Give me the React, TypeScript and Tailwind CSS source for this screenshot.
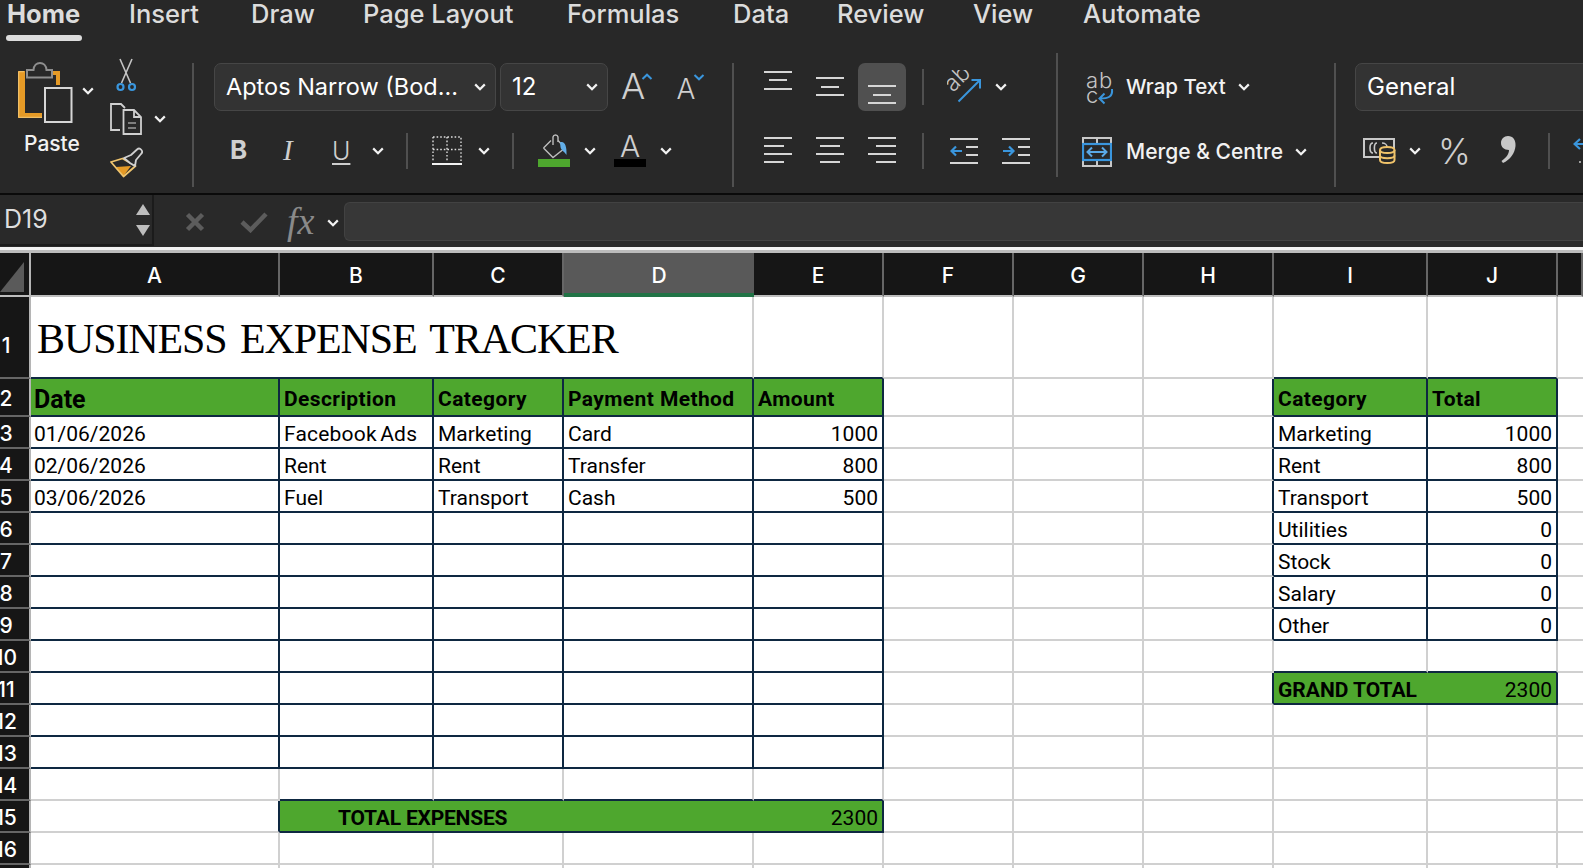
import React from "react";

const tabs = [
  { label: "Home", w: "w-[122px]", active: true },
  { label: "Insert", w: "w-[122px]" },
  { label: "Draw", w: "w-[112px]" },
  { label: "Page Layout", w: "w-[204px]" },
  { label: "Formulas", w: "w-[166px]" },
  { label: "Data", w: "w-[104px]" },
  { label: "Review", w: "w-[136px]" },
  { label: "View", w: "w-[110px]" },
  { label: "Automate", w: "w-[130px]" },
];

const colLetters = ["A", "B", "C", "D", "E", "F", "G", "H", "I", "J", ""];

const content: Record<number, Record<number, string>> = {
  2: { 0: "Date", 1: "Description", 2: "Category", 3: "Payment Method", 4: "Amount", 8: "Category", 9: "Total" },
  3: { 0: "01/06/2026", 1: "Facebook Ads", 2: "Marketing", 3: "Card", 4: "1000", 8: "Marketing", 9: "1000" },
  4: { 0: "02/06/2026", 1: "Rent", 2: "Rent", 3: "Transfer", 4: "800", 8: "Rent", 9: "800" },
  5: { 0: "03/06/2026", 1: "Fuel", 2: "Transport", 3: "Cash", 4: "500", 8: "Transport", 9: "500" },
  6: { 8: "Utilities", 9: "0" },
  7: { 8: "Stock", 9: "0" },
  8: { 8: "Salary", 9: "0" },
  9: { 8: "Other", 9: "0" },
};

function isBoxed(r: number, c: number) {
  if (r >= 2 && r <= 13 && c >= 0 && c <= 4) return true;
  if (r >= 2 && r <= 9 && (c === 8 || c === 9)) return true;
  if (r === 11 && (c === 8 || c === 9)) return true;
  if (r === 15 && c >= 1 && c <= 4) return true;
  return false;
}

function Chev({ className = "" }: { className?: string }) {
  return (
    <svg viewBox="0 0 12 8" className={`w-[12px] h-[8px] shrink-0 ${className}`} fill="none">
      <path d="M1.2 1.4 L6 6.2 L10.8 1.4" stroke="#f2f2f2" strokeWidth="2.2" />
    </svg>
  );
}

function Sep({ className = "" }: { className?: string }) {
  return <div className={`w-[2px] h-[36px] bg-[#505050] shrink-0 ${className}`} />;
}

function Lines({ rows, className = "" }: { rows: [number, number, number][]; className?: string }) {
  return (
    <svg viewBox="0 0 28 34" className={`w-[28px] h-[34px] shrink-0 ${className}`}>
      {rows.map(([y, x1, x2], i) => (
        <rect key={i} x={x1} y={y} width={x2 - x1} height="2" fill="#d6d6d6" />
      ))}
    </svg>
  );
}

function Indent({ inc, className = "" }: { inc?: boolean; className?: string }) {
  return (
    <svg viewBox="0 0 28 28" className={`w-[28px] h-[28px] shrink-0 ${className}`} fill="none">
      <rect x="0" y="1" width="28" height="2" fill="#d6d6d6" />
      <rect x="16" y="9" width="12" height="2" fill="#d6d6d6" />
      <rect x="16" y="17" width="12" height="2" fill="#d6d6d6" />
      <rect x="0" y="25" width="28" height="2" fill="#d6d6d6" />
      {inc ? (
        <path d="M1 14 H11 M7 9.5 L11.5 14 L7 18.5" stroke="#3a96dd" strokeWidth="2.2" />
      ) : (
        <path d="M12 14 H2 M6 9.5 L1.5 14 L6 18.5" stroke="#3a96dd" strokeWidth="2.2" />
      )}
    </svg>
  );
}

function ClipboardIcon() {
  return (
    <svg viewBox="18 60 56 64" className="w-[56px] h-[64px] shrink-0" fill="none">
      <path d="M18 71 H25 V113 H42 V118 H18 Z" fill="#e59a26" />
      <path d="M18.7 71.7 H24 M18.7 71.7 V117.3 H42" stroke="#f3c877" strokeWidth="1" />
      <path d="M51 71 H60 V85 H56 V75 H51 Z" fill="#e59a26" />
      <path d="M27 77.5 V70 H33.5 C34 60.5 46 60.5 46.5 70 H52 V77.5 Z" stroke="#8e8e8e" strokeWidth="2" />
      <rect x="45" y="88" width="26.5" height="34" stroke="#d6d6d6" strokeWidth="2" />
    </svg>
  );
}

function ScissorsIcon() {
  return (
    <svg viewBox="114 58 24 34" className="w-[24px] h-[34px] shrink-0 ml-[4px]" fill="none">
      <path d="M120 59 L130.5 83 M132 59 L121.5 83" stroke="#c4c4c4" strokeWidth="1.6" />
      <circle cx="120.5" cy="87" r="3" stroke="#3a96dd" strokeWidth="2.2" />
      <circle cx="132" cy="87" r="3" stroke="#3a96dd" strokeWidth="2.2" />
    </svg>
  );
}

function CopyIcon() {
  return (
    <svg viewBox="110 102 33 34" className="w-[33px] h-[34px] shrink-0" fill="none">
      <path d="M120 130 H111 V104 H121 L125 108" stroke="#d0d0d0" strokeWidth="1.8" />
      <path d="M123.5 110 V134 H141 V117 L134 110 Z M134 110 V117 H141" stroke="#d0d0d0" strokeWidth="1.8" />
      <path d="M128 123 H136 M128 128 H136" stroke="#9a9a9a" strokeWidth="1.6" />
    </svg>
  );
}

function BrushIcon() {
  return (
    <svg viewBox="110 146 33 32" className="w-[33px] h-[32px] shrink-0" fill="none">
      <path d="M116 167 L131 166 L123.5 176 Z" fill="#e59a26" />
      <path d="M111 162 L122.5 158.5 L135.5 166 L123.5 176.5 Z" stroke="#f0c56e" strokeWidth="1.8" strokeLinejoin="round" />
      <path d="M124 158 L130 163 L135 166 L136 160 L141 154 A3 3 0 0 0 137 149.5 L131 155 Z" stroke="#d0d0d0" strokeWidth="1.8" fill="#282828" strokeLinejoin="round" />
    </svg>
  );
}

function FontUp() {
  return (
    <svg viewBox="0 0 32 30" className="w-[32px] h-[30px] shrink-0 ml-[14px] overflow-visible">
      <text x="-1" y="27" fontSize="36" fontWeight="300" fill="#cfcfcf" className="font-['Inter',sans-serif]">A</text>
      <path d="M20.5 7 L25 2.7 L29.5 7" fill="none" stroke="#3a96dd" strokeWidth="2" />
    </svg>
  );
}

function FontDown() {
  return (
    <svg viewBox="0 0 28 30" className="w-[28px] h-[30px] shrink-0 ml-[23px] overflow-visible">
      <text x="-0.5" y="27" fontSize="28" fontWeight="300" fill="#cfcfcf" className="font-['Inter',sans-serif]">A</text>
      <path d="M17.5 3 L22 7.3 L26.5 3" fill="none" stroke="#3a96dd" strokeWidth="2" />
    </svg>
  );
}

function BorderIcon() {
  return (
    <svg viewBox="0 0 30 30" className="w-[30px] h-[30px] shrink-0 ml-[24px]" fill="none">
      <path d="M1 1 H29 V26 M1 1 V26 M1 13.5 H29 M15 1 V26" stroke="#dddddd" strokeWidth="1.4" strokeDasharray="1.6 2" />
      <rect x="0" y="27" width="30" height="2" fill="#f2f2f2" />
    </svg>
  );
}

function FillIcon() {
  return (
    <svg viewBox="538 134 32 34" className="w-[32px] h-[34px] shrink-0 ml-[24px]" fill="none">
      <path d="M543.5 148 L551 140.5 M558 140.5 L565 148 L553 157.5 L543.5 148" stroke="#bdbdbd" strokeWidth="1.4" />
      <path d="M553 145 V137 Q553.5 135 555.5 135 Q557.5 135 558 137 V142" stroke="#bdbdbd" strokeWidth="1.4" />
      <path d="M560 142.5 C564.5 140.5 567 146 566.5 155 C565 152 561 150.5 560.5 147 Z" fill="#62aee8" />
      <rect x="538" y="159" width="32" height="8" fill="#4ea72e" />
    </svg>
  );
}

function TextColorIcon() {
  return (
    <svg viewBox="0 0 32 34" className="w-[32px] h-[34px] shrink-0 ml-[18px]">
      <text x="16" y="23" textAnchor="middle" fontSize="30" fontWeight="300" fill="#cfcfcf" className="font-['Inter',sans-serif]">A</text>
      <rect x="0" y="25" width="32" height="8" fill="#000000" />
    </svg>
  );
}

function OrientIcon() {
  return (
    <svg viewBox="947 69 34 34" className="w-[34px] h-[34px] shrink-0 ml-[23px]" fill="none">
      <text x="953" y="92" fontSize="23" fontWeight="300" fill="#c4c4c4" transform="rotate(-45 953 92)" className="font-['Inter',sans-serif]">ab</text>
      <path d="M958.5 100.5 L979.5 79.5 M971.5 79 H980 V87.5" stroke="#3a96dd" strokeWidth="2" />
    </svg>
  );
}

function WrapIcon() {
  return (
    <svg viewBox="1086 69 28 35" className="w-[28px] h-[35px] shrink-0 ml-[27px]" fill="none">
      <text x="1086" y="87" fontSize="22" fontWeight="300" letterSpacing="1" fill="#c4c4c4" className="font-['Inter',sans-serif]">ab</text>
      <text x="1086" y="102" fontSize="22" fontWeight="300" fill="#c4c4c4" className="font-['Inter',sans-serif]">c</text>
      <path d="M1112 88 C1113 96 1108 97.5 1100 97.5 M1104.5 92.5 L1099.5 97.5 L1104.5 102.5" stroke="#3a96dd" strokeWidth="2" />
    </svg>
  );
}

function MergeIcon() {
  return (
    <svg viewBox="0 0 30 30" className="w-[30px] h-[30px] shrink-0 ml-[23px]" fill="none">
      <rect x="1" y="1" width="28" height="28" stroke="#c8c8c8" strokeWidth="2" />
      <path d="M15 1 V7 M15 23 V29" stroke="#c8c8c8" strokeWidth="2" />
      <rect x="1" y="7" width="28" height="16" stroke="#3a96dd" strokeWidth="2.2" fill="#282828" />
      <path d="M6 15 H24 M10 10.5 L5.5 15 L10 19.5 M20 10.5 L24.5 15 L20 19.5" stroke="#5aa9e6" strokeWidth="2" />
    </svg>
  );
}

function CurrencyIcon() {
  return (
    <svg viewBox="1363 141 33 27" className="w-[33px] h-[27px] shrink-0 ml-[26px]" fill="none">
      <rect x="1364" y="142" width="30" height="18" stroke="#c8c8c8" strokeWidth="2" />
      <path d="M1373 146 C1369 146 1369 156 1373 156 M1377 146 C1373.5 146 1373.5 156 1377 156 M1382 146 C1385 146 1387 148 1387 150" stroke="#c8c8c8" strokeWidth="1.6" />
      <path d="M1380 153 C1380 149 1394.5 149 1394.5 153 V163 C1394.5 167 1380 167 1380 163 Z" fill="#282828" stroke="#f0c36a" strokeWidth="2" />
      <path d="M1380 153 C1380 157 1394.5 157 1394.5 153 M1380 158.5 C1380 162 1394.5 162 1394.5 158.5" stroke="#f0c36a" strokeWidth="2" />
    </svg>
  );
}

function CommaIcon() {
  return (
    <svg viewBox="0 0 16 32" className="w-[16px] h-[32px] shrink-0 ml-[30px]">
      <path d="M8 1 C13 1 16 5 15.5 11 C15 18 10 25 3 28 L1.5 26 C6 23 9 19 9 15 C4 15 1 12 1 8 C1 4 4 1 8 1 Z" fill="#c8c8c8" />
    </svg>
  );
}

function Dropdown({ text, className = "", chev = true }: { text: string; className?: string; chev?: boolean }) {
  return (
    <div className={`h-[48px] rounded-[7px] bg-[#333333] border border-[#464646] flex items-center justify-between pl-[11px] pr-[9px] shrink-0 text-white ${className}`}>
      <span className="whitespace-nowrap">{text}</span>
      {chev && <Chev />}
    </div>
  );
}

function Ribbon() {
  return (
    <div className="flex h-[152px] bg-[#282828] font-['Inter',sans-serif] text-[#f2f2f2] overflow-hidden">
      {/* clipboard */}
      <div className="w-[192px] shrink-0 flex pl-[18px] pt-[17px]">
        <div className="w-[60px] flex flex-col mt-[2px]">
          <ClipboardIcon />
          <span className="ml-[6px] mt-[6px] text-[21px] font-medium leading-[28px]">Paste</span>
        </div>
        <Chev className="ml-[4px] mt-[29px]" />
        <div className="ml-[16px] flex flex-col">
          <ScissorsIcon />
          <div className="flex items-center mt-[10px] h-[34px]">
            <CopyIcon />
            <Chev className="ml-[11px]" />
          </div>
          <div className="mt-[10px]">
            <BrushIcon />
          </div>
        </div>
      </div>
      <div className="w-[2px] h-[124px] mt-[22px] bg-[#505050] shrink-0" />

      {/* font */}
      <div className="w-[538px] shrink-0 pl-[1px] pt-[22px] flex flex-col gap-[16px]">
        <div className="flex items-center h-[48px]">
          <Dropdown text="Aptos Narrow (Bod..." className="ml-[19px] w-[282px] text-[23.5px]" />
          <Dropdown text="12" className="ml-[4px] w-[108px] text-[24px]" />
          <FontUp />
          <FontDown />
        </div>
        <div className="flex items-center h-[48px] text-[#cfcfcf]">
          <span className="ml-[35px] w-[17px] -mt-[2px] text-[26px] font-bold leading-none">B</span>
          <span className="ml-[36px] w-[14px] -mt-[2px] text-[29px] italic leading-none font-['Liberation_Serif',serif]">I</span>
          <span className="ml-[35px] w-[18px] text-[25px] font-light underline underline-offset-[3px] decoration-2 leading-none">U</span>
          <Chev className="ml-[22px]" />
          <Sep className="ml-[22px]" />
          <BorderIcon />
          <Chev className="ml-[16px]" />
          <Sep className="ml-[22px]" />
          <FillIcon />
          <Chev className="ml-[14px]" />
          <TextColorIcon />
          <Chev className="ml-[14px]" />
        </div>
      </div>
      <div className="w-[2px] h-[124px] mt-[22px] bg-[#505050] shrink-0" />

      {/* alignment */}
      <div className="w-[322px] shrink-0 pl-[1px] pt-[22px] flex flex-col gap-[16px]">
        <div className="flex items-center h-[48px]">
          <Lines className="ml-[29px]" rows={[[1, 0, 28], [9, 5, 23], [18, 0, 28]]} />
          <Lines className="ml-[24px]" rows={[[7, 0, 28], [16, 5, 23], [24, 0, 28]]} />
          <div className="ml-[14px] w-[48px] h-[48px] rounded-[7px] bg-[#505050] flex justify-center shrink-0">
            <Lines rows={[[3, 0, 28], [12, 5, 23], [20, 0, 28]]} className="mt-[19px]" />
          </div>
          <Sep className="ml-[16px]" />
          <OrientIcon />
          <Chev className="ml-[14px]" />
        </div>
        <div className="flex items-center h-[48px]">
          <Lines className="ml-[29px]" rows={[[3, 0, 28], [11, 0, 20], [19, 0, 28], [27, 0, 20]]} />
          <Lines className="ml-[24px]" rows={[[3, 0, 28], [11, 4, 24], [19, 0, 28], [27, 4, 24]]} />
          <Lines className="ml-[24px]" rows={[[3, 0, 28], [11, 8, 28], [19, 0, 28], [27, 8, 28]]} />
          <Sep className="ml-[26px]" />
          <Indent className="ml-[26px]" />
          <Indent inc className="ml-[24px]" />
        </div>
      </div>
      <div className="w-[2px] h-[124px] mt-[12px] bg-[#505050] shrink-0" />

      {/* wrap and merge */}
      <div className="w-[276px] shrink-0 pl-[1px] pt-[22px] flex flex-col gap-[16px] text-[21px] font-medium">
        <div className="flex items-center h-[48px]">
          <WrapIcon />
          <span className="ml-[12px] w-[101px] whitespace-nowrap text-[20.5px]">Wrap Text</span>
          <Chev className="ml-[11px]" />
        </div>
        <div className="flex items-center h-[48px] pt-[2px]">
          <MergeIcon />
          <span className="ml-[14px] w-[158px] whitespace-nowrap">Merge &amp; Centre</span>
          <Chev className="ml-[11px]" />
        </div>
      </div>
      <div className="w-[2px] h-[124px] mt-[22px] bg-[#505050] shrink-0" />

      {/* number */}
      <div className="flex-1 pl-[1px] pt-[22px] flex flex-col gap-[16px] overflow-hidden">
        <div className="flex items-center h-[48px]">
          <Dropdown text="General" chev={false} className="ml-[18px] w-[260px] text-[24px]" />
        </div>
        <div className="flex items-center h-[48px]">
          <CurrencyIcon />
          <Chev className="ml-[13px]" />
          <span className="ml-[17px] w-[32px] text-[35px] font-light leading-none text-[#cfcfcf]">%</span>
          <CommaIcon />
          <Sep className="ml-[32px]" />
          <svg viewBox="0 0 10 28" className="w-[10px] h-[28px] ml-[23px] shrink-0" fill="none">
            <path d="M10 7 H2 M7 2 L1.5 7 L7 12" stroke="#3a96dd" strokeWidth="2.2" />
            <circle cx="7" cy="25" r="1" fill="#c8c8c8" />
          </svg>
        </div>
      </div>
    </div>
  );
}

function FormulaBar() {
  return (
    <div className="flex h-[52px] bg-[#292929] font-['Inter',sans-serif]">
      <div className="w-[154px] h-[51px] shrink-0 border-r-2 border-b-2 border-[#1b1b1b] flex items-center justify-between pl-[4px] pr-[2px]">
        <span className="text-[25px] text-[#dedede]">D19</span>
        <div className="flex flex-col gap-[10px]">
          <svg viewBox="0 0 14 11" className="w-[14px] h-[11px]"><path d="M7 0 L14 11 H0 Z" fill="#bdbdbd" /></svg>
          <svg viewBox="0 0 14 11" className="w-[14px] h-[11px]"><path d="M7 11 L14 0 H0 Z" fill="#bdbdbd" /></svg>
        </div>
      </div>
      <svg viewBox="0 0 20 20" className="w-[20px] h-[20px] ml-[31px] mt-[17px] shrink-0" fill="none">
        <path d="M2.5 2.5 L17.5 17.5 M17.5 2.5 L2.5 17.5" stroke="#5c5c5c" strokeWidth="4.5" />
      </svg>
      <svg viewBox="0 0 28 22" className="w-[28px] h-[22px] ml-[35px] mt-[16px] shrink-0" fill="none">
        <path d="M2 11 L10.5 19 L26 3" stroke="#5c5c5c" strokeWidth="4.5" />
      </svg>
      <span className="ml-[19px] mt-[7px] w-[30px] shrink-0 text-[38px] italic leading-[38px] text-[#8a8a8a] font-['Liberation_Serif',serif]">fx</span>
      <Chev className="ml-[10px] mt-[24px]" />
      <div className="flex-1 ml-[5px] mt-[7px] h-[39px] bg-[#373737] border border-[#424242] border-r-0 rounded-l-[6px]" />
    </div>
  );
}

function ColHeaders() {
  return (
    <>
      <div className="h-[44px] bg-[#161616] border-b-2 border-r-2 border-b-[#bdbdbd] border-r-[#b5b5b5] flex">
        <svg viewBox="0 0 24 30" className="w-[24px] h-[30px] mt-[9px]">
          <path d="M24 0 V30 H0 Z" fill="#5a5a5a" />
        </svg>
      </div>
      {colLetters.map((l, i) =>
        l === "D" ? (
          <div key={i} className="h-[44px] pt-[6px] bg-[#595959] border-b-4 border-b-[#217346] flex items-center justify-center font-['Inter',sans-serif] font-medium text-[21px] text-white">
            {l}
          </div>
        ) : (
          <div key={i} className="h-[44px] pt-[4px] bg-[#161616] border-b-2 border-b-[#bdbdbd] border-r-2 border-r-[#666666] flex items-center justify-center font-['Inter',sans-serif] font-medium text-[21px] text-white">
            {l}
          </div>
        )
      )}
    </>
  );
}

function Sheet() {
  const rows = Array.from({ length: 17 }, (_, i) => i + 1);
  const colCount = 10;

  return (
    <div className="grid grid-cols-[31px_249px_154px_130px_190px_130px_130px_130px_130px_154px_130px_25px] bg-white font-['Roboto',sans-serif] text-[21px] text-black">
      <ColHeaders />
      {rows.map((r) => {
        const h = r === 1 ? "h-[82px]" : r === 2 ? "h-[38px]" : "h-[32px]";
        const cells: React.ReactNode[] = [];
        for (let c = 0; c < colCount; c++) {
          let span = "";
          let skip = 0;
          if (r === 1 && c === 0) { span = "col-span-4"; skip = 3; }
          if (r === 15 && c === 1) { span = "col-span-4"; skip = 3; }
          if (r === 11 && c === 8) { span = "col-span-2"; skip = 1; }
          const last = c + skip;
          const navyR = isBoxed(r, last) || isBoxed(r, last + 1);
          const navyB = isBoxed(r, c) || isBoxed(r + 1, c);
          const green = (r === 2 && isBoxed(r, c)) || (r === 11 && c === 8) || (r === 15 && c === 1);
          const text = content[r]?.[c] ?? "";
          const num = r > 2 && (c === 4 || c === 9);
          let inner: React.ReactNode = null;
          if (r === 1 && c === 0) {
            inner = (
              <span className="pl-[6px] text-[42px] tracking-[-1.1px] [word-spacing:4px] whitespace-nowrap font-['Liberation_Serif',serif]">
                BUSINESS EXPENSE TRACKER
              </span>
            );
          } else if (r === 15 && c === 1) {
            inner = (
              <div className="flex justify-between w-full pl-[58px] pr-[4px]">
                <span className="font-bold tracking-[-0.2px]">TOTAL EXPENSES</span>
                <span>2300</span>
              </div>
            );
          } else if (r === 11 && c === 8) {
            inner = (
              <div className="flex justify-between w-full pl-[4px] pr-[4px]">
                <span className="font-bold">GRAND TOTAL</span>
                <span>2300</span>
              </div>
            );
          } else if (r === 2 && text) {
            inner = <span className={c === 0 ? "pl-[3px] text-[25px] font-bold" : "pl-[4px] font-bold tracking-[0.4px]"}>{text}</span>;
          } else if (text) {
            const wide = text === "Facebook Ads" ? "tracking-[0.2px] [word-spacing:-2px]" : "";
            inner = <span className={`${wide} ${num ? "w-full text-right pr-[4px]" : c === 0 ? "pl-[3px]" : "pl-[4px]"}`}>{text}</span>;
          }
          cells.push(
            <div
              key={c}
              className={`${h} ${span} ${r === 1 ? "pt-[4px]" : "pt-[5px]"} flex items-center overflow-hidden whitespace-nowrap border-r-2 border-b-2 ${navyR ? "border-r-[#0e2841]" : "border-r-[#d0d0d0]"} ${navyB ? "border-b-[#0e2841]" : "border-b-[#d0d0d0]"} ${green ? "bg-[#4ea72e]" : ""}`}
            >
              {inner}
            </div>
          );
          c += skip;
        }
        return (
          <React.Fragment key={r}>
            <div className={`${h} bg-[#161616] border-r-2 border-b-2 border-r-[#b5b5b5] border-b-[#666666] overflow-hidden flex items-center font-['Inter',sans-serif] font-medium text-[21px] text-white ${r === 1 ? "pt-[17px]" : "pt-[4px]"}`}>
              <div className="w-[12px] flex justify-center shrink-0 whitespace-nowrap">{r}</div>
            </div>
            {cells}
            <div className={`${h} border-b-2 border-b-[#d0d0d0]`} />
          </React.Fragment>
        );
      })}
    </div>
  );
}

export default function App() {
  return (
    <div className="h-screen w-full overflow-hidden bg-white">
      <div className="flex h-[41px] pl-[7px] bg-[#282828] overflow-hidden font-['Inter',sans-serif] text-[25.5px] text-[#dcdcdc]">
        {tabs.map((t) => (
          <div key={t.label} className={`${t.w} flex flex-col shrink-0`}>
            <span className={`leading-[28px] whitespace-nowrap ${t.active ? "font-bold" : "font-medium"}`}>{t.label}</span>
            {t.active && <div className="-ml-[1px] w-[76px] mt-[7px] h-[6px] rounded-full bg-[#dcdcdc]" />}
          </div>
        ))}
      </div>
      <Ribbon />
      <div className="h-[2px] bg-[#0a0a0a]" />
      <FormulaBar />
      <div className="h-[3px] bg-[#f2f2f2]" />
      <div className="h-[3px] bg-[#bcbcbc]" />
      <Sheet />
    </div>
  );
}
